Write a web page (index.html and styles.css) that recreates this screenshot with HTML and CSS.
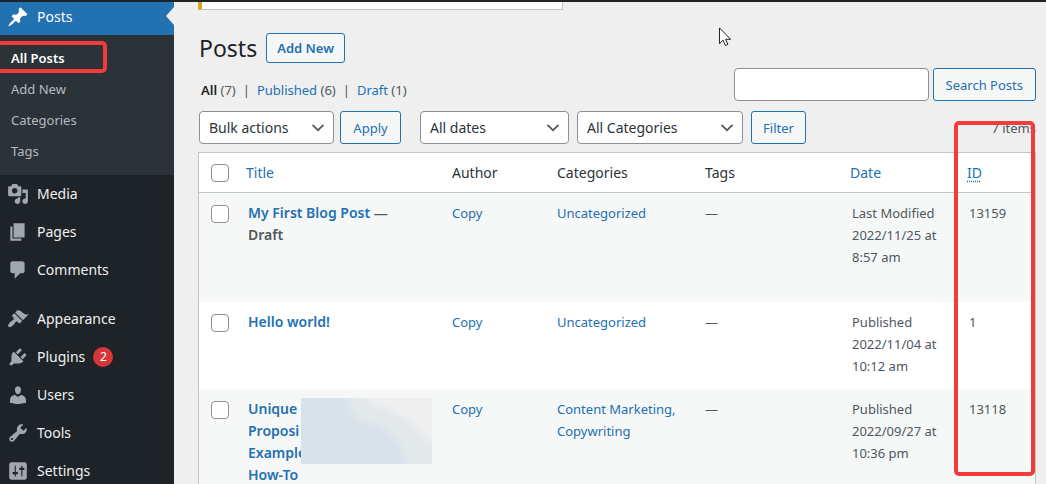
FILE: index.html
```html
<!DOCTYPE html>
<html lang="en">
<head>
<meta charset="utf-8">
<title>Posts</title>
<link rel="stylesheet" href="styles.css">
</head>
<body>
<div class="topbar"></div>
<div class="shell">
  <nav class="sidebar">
    <a class="item current" href="#"><svg class="icon" viewBox="0 0 20 20"><path d="M10.44 3.02l1.82-1.82 6.36 6.35-1.83 1.82c-1.05-.68-2.48-.57-3.41.36l-.75.75c-.92.93-1.04 2.35-.35 3.41l-1.83 1.82-2.41-2.41-2.8 2.79c-.42.42-3.38 2.71-3.8 2.29s1.86-3.39 2.28-3.81l2.79-2.79L4.1 9.36l1.83-1.82c1.05.69 2.48.57 3.4-.36l.75-.75c.93-.92 1.05-2.35.36-3.41z"/></svg>Posts</a>
    <ul class="submenu">
      <li class="active"><a href="#">All Posts</a></li>
      <li><a href="#">Add New</a></li>
      <li><a href="#">Categories</a></li>
      <li><a href="#">Tags</a></li>
    </ul>
    <div class="group">
      <a class="item" href="#"><svg class="icon" viewBox="0 0 20 20"><path d="M13 11V4c0-.55-.45-1-1-1h-1.67L9 1H5L3.67 3H2c-.55 0-1 .45-1 1v7c0 .55.45 1 1 1h10c.55 0 1-.45 1-1zM7 4.5c1.38 0 2.5 1.12 2.5 2.5S8.38 9.5 7 9.5 4.5 8.38 4.5 7 5.62 4.5 7 4.5zM14 6h5v10.5c0 1.38-1.12 2.5-2.5 2.5S14 17.88 14 16.5s1.12-2.5 2.5-2.5c.17 0 .34.02.5.05V9h-3V6zm-4 8.05V13h2v3.5c0 1.38-1.12 2.5-2.5 2.5S7 17.88 7 16.5 8.12 14 9.5 14c.17 0 .34.02.5.05z"/></svg>Media</a>
      <a class="item" href="#"><svg class="icon" viewBox="0 0 20 20"><path d="M6 15V2h10v13H6zm-1 1h8v2H3V5h2v11z"/></svg>Pages</a>
      <a class="item" href="#"><svg class="icon" viewBox="0 0 20 20"><path d="M5 2h9c1.1 0 2 .9 2 2v7c0 1.1-.9 2-2 2h-2l-5 5v-5H5c-1.1 0-2-.9-2-2V4c0-1.1.9-2 2-2z"/></svg>Comments</a>
    </div>
    <div class="group">
      <a class="item" href="#"><svg class="icon" viewBox="0 0 20 20"><path d="M14.48 11.06L7.41 3.99l1.5-1.5c.5-.56 2.3-.47 3.51.32 1.21.8 1.43 1.28 2.91 2.1 1.18.64 2.45 1.26 4.45.85zm-.71.71L6.7 4.7 4.93 6.47c-.39.39-.39 1.02 0 1.41l1.06 1.06c.39.39.39 1.03 0 1.42-.6.6-1.43 1.11-2.21 1.69-.35.26-.7.53-1.01.84C1.43 14.23.4 16.08 1.4 17.07c.99 1 2.84-.03 4.18-1.36.31-.31.58-.66.85-1.02.57-.78 1.08-1.61 1.69-2.21.39-.39 1.02-.39 1.41 0l1.06 1.06c.39.39 1.02.39 1.41 0z"/></svg>Appearance</a>
      <a class="item" href="#"><svg class="icon" viewBox="0 0 20 20"><path d="M13.11 4.36L9.87 7.6 8 5.73l3.24-3.24c.35-.34 1.05-.2 1.56.32.52.51.66 1.21.31 1.55zm-8 1.77l.91-1.12 9.01 9.01-1.19.84c-.71.71-2.63 1.16-3.82 1.16H6.14L4.9 17.26c-.59.59-1.54.59-2.12 0-.59-.58-.59-1.53 0-2.12l1.24-1.24v-3.88c0-1.13.4-3.19 1.09-3.89zm7.26 3.97l3.24-3.24c.34-.35 1.04-.21 1.55.31.52.51.66 1.21.31 1.55l-3.24 3.25z"/></svg>Plugins<span class="count">2</span></a>
      <a class="item" href="#"><svg class="icon" viewBox="0 0 20 20"><path d="M10 9.25c-2.27 0-2.73-3.44-2.73-3.44C7 4.02 7.82 2 9.97 2c2.16 0 2.98 2.02 2.71 3.81 0 0-.41 3.44-2.68 3.44zm0 2.57L12.72 10c2.39 0 4.52 2.33 4.52 4.53v2.49s-3.65 1.13-7.24 1.13c-3.65 0-7.24-1.13-7.24-1.13v-2.49c0-2.25 1.94-4.48 4.47-4.48z"/></svg>Users</a>
      <a class="item" href="#"><svg class="icon" viewBox="0 0 20 20"><path d="M16.68 9.77c-1.34 1.34-3.3 1.67-4.95.99l-5.41 6.52c-.99.99-2.59.99-3.58 0s-.99-2.59 0-3.57l6.52-5.42c-.68-1.65-.35-3.61.99-4.95 1.28-1.28 3.12-1.62 4.72-1.06l-2.89 2.89 2.82 2.82 2.86-2.87c.53 1.58.18 3.39-1.08 4.65zM3.81 16.21c.4.39 1.04.39 1.43 0 .4-.4.4-1.04 0-1.43-.39-.4-1.03-.4-1.43 0-.39.39-.39 1.03 0 1.43z"/></svg>Tools</a>
      <a class="item" href="#"><svg class="icon" viewBox="0 0 20 20"><path d="M18 16V4c0-1.1-.9-2-2-2H4c-1.1 0-2 .9-2 2v12c0 1.1.9 2 2 2h12c1.1 0 2-.9 2-2zM8 11h1c.55 0 1 .45 1 1s-.45 1-1 1H8v1.5c0 .28-.22.5-.5.5s-.5-.22-.5-.5V13H6c-.55 0-1-.45-1-1s.45-1 1-1h1V5.5c0-.28.22-.5.5-.5s.5.22.5.5V11zm5-2h-1c-.55 0-1-.45-1-1s.45-1 1-1h1V5.5c0-.28.22-.5.5-.5s.5.22.5.5V7h1c.55 0 1 .45 1 1s-.45 1-1 1h-1v5.5c0 .28-.22.5-.5.5s-.5-.22-.5-.5V9z"/></svg>Settings</a>
    </div>
  </nav>
  <main class="main">
    <div class="notice"></div>
    <header class="heading">
      <h1>Posts</h1>
      <a class="button add" href="#">Add New</a>
    </header>
    <div class="filters">
      <ul class="views">
        <li><a class="all" href="#">All</a> (7)</li>
        <li><a href="#">Published</a> (6)</li>
        <li><a href="#">Draft</a> (1)</li>
      </ul>
      <form class="search">
        <input type="search" aria-label="Search Posts">
        <button class="button" type="button">Search Posts</button>
      </form>
    </div>
    <div class="actions">
      <div class="bulk">
        <select class="bulk-select" aria-label="Bulk actions"><option>Bulk actions</option></select>
        <button class="button apply" type="button">Apply</button>
      </div>
      <div class="narrow">
        <select class="date-select" aria-label="Filter by date"><option>All dates</option></select>
        <select class="cat-select" aria-label="Filter by category"><option>All Categories</option></select>
        <button class="button filter" type="button">Filter</button>
      </div>
      <span class="total">7 items</span>
    </div>
    <table class="posts">
      <colgroup><col class="c-check"><col><col class="c-author"><col class="c-cats"><col class="c-tags"><col class="c-date"><col class="c-id"></colgroup>
      <thead>
        <tr>
          <th class="check"><input type="checkbox" aria-label="Select all"></th>
          <th class="inset"><a href="#">Title</a></th>
          <th>Author</th>
          <th>Categories</th>
          <th>Tags</th>
          <th class="inset"><a href="#">Date</a></th>
          <th class="inset"><a href="#"><abbr>ID</abbr></a></th>
        </tr>
      </thead>
      <tbody>
        <tr class="tall">
          <td class="check"><input type="checkbox" aria-label="Select My First Blog Post"></td>
          <td class="title"><a href="#">My First Blog Post</a> — <span>Draft</span></td>
          <td><a href="#">Copy</a></td>
          <td><a href="#">Uncategorized</a></td>
          <td>—</td>
          <td>Last Modified<br>2022/11/25 at 8:57 am</td>
          <td>13159</td>
        </tr>
        <tr>
          <td class="check"><input type="checkbox" aria-label="Select Hello world!"></td>
          <td class="title"><a href="#">Hello world!</a></td>
          <td><a href="#">Copy</a></td>
          <td><a href="#">Uncategorized</a></td>
          <td>—</td>
          <td>Published<br>2022/11/04 at 10:12 am</td>
          <td>1</td>
        </tr>
        <tr class="tall">
          <td class="check"><input type="checkbox" aria-label="Select Unique"></td>
          <td class="title"><div class="masked"><a href="#">Unique<br>Proposi<br>Example<br>How-To</a>
            <svg class="mask" viewBox="0 0 131 66" preserveAspectRatio="none">
              <defs><filter id="soft"><feGaussianBlur stdDeviation="3"/></filter></defs>
              <rect width="131" height="66" fill="#d8e2eb"/>
              <path filter="url(#soft)" d="M45-12Q44 22 68 26Q100 30 108 78H145V-12Z" fill="#e3e8eb"/>
              <path filter="url(#soft)" d="M54-12Q66 8 84 10Q108 20 119 34T140 46V-12Z" fill="#efefef"/>
            </svg></div></td>
          <td><a href="#">Copy</a></td>
          <td><a href="#">Content Marketing,<br>Copywriting</a></td>
          <td>—</td>
          <td>Published<br>2022/09/27 at 10:36 pm</td>
          <td>13118</td>
        </tr>
      </tbody>
    </table>
    <div class="id-outline"></div>
    <svg class="pointer" viewBox="0 0 13 20"><path d="M.5.9v15.7l3.6-3.4 2.4 5.3 2.4-1.1-2.3-5.1h5z" fill="#fff" stroke="#1d2327"/></svg>
  </main>
</div>
</body>
</html>
```

FILE: styles.css
```css
*, *::before, *::after { box-sizing: border-box; }
body {
  margin: 0;
  height: 100vh;
  overflow: hidden;
  background: #efefef;
  color: #50575e;
  font: 13px/22px "Noto Sans", "Open Sans", sans-serif;
}
a { color: #2271b1; text-decoration: none; }
ul { list-style: none; margin: 0; padding: 0; }

.topbar { height: 2px; background: #1d2327; }
.shell { display: flex; min-height: 100vh; }

.sidebar { flex: 0 0 174px; background: #1d2327; }
.item {
  display: flex;
  align-items: center;
  gap: 8px;
  height: 38px;
  padding-left: 7px;
  color: #f0f0f1;
  font-size: 14px;
}
.icon { width: 22px; height: 22px; fill: #a2a7ac; }
.current { position: relative; height: 33px; padding-bottom: 4px; background: #2271b1; color: #fff; }
.current .icon { fill: #fff; }
.current::after {
  content: "";
  position: absolute;
  right: 0;
  top: 5px;
  border: 9px solid transparent;
  border-left-width: 0;
  border-right: 8px solid #efefef;
}
.submenu { padding: 8px 0; background: #2c3338; }
.submenu li { position: relative; height: 31px; padding-left: 11px; line-height: 30px; }
.submenu a { color: #b5babf; }
.submenu .active a { color: #fff; font-weight: 600; }
.submenu .active::after {
  content: "";
  position: absolute;
  left: -4px;
  top: -2px;
  width: 111px;
  height: 32px;
  border: 4px solid #f23c3c;
  border-radius: 5px;
}
.group + .group { padding-top: 11px; }
.count {
  width: 20px;
  height: 20px;
  border-radius: 10px;
  background: #d63638;
  color: #fff;
  font-size: 12px;
  line-height: 20px;
  text-align: center;
}

.main { position: relative; flex: 1; min-width: 0; padding: 0 10px 0 24px; }
.notice {
  width: 365px;
  height: 8px;
  background: #fff;
  border: 1px solid #c3c4c7;
  border-top: 0;
  border-left: 4px solid #dba617;
}
.heading { display: flex; align-items: center; gap: 9px; padding: 23px 0 5px 1px; }
h1 { margin: 0; color: #1d2327; font-size: 23px; font-weight: 400; line-height: 30px; }
.button {
  height: 33px;
  padding: 0 12px;
  border: 1px solid #2271b1;
  border-radius: 3px;
  background: #f6f7f7;
  color: #2271b1;
  font: inherit;
  line-height: 30px;
  text-align: center;
}
.add { height: 30px; line-height: 28px; padding: 0 10px; font-weight: 600; }
.apply { width: 61px; }
.filter { width: 55px; padding: 0; }
.filters { display: flex; align-items: flex-end; justify-content: space-between; }
.views { display: flex; padding-left: 3px; }
.views li + li::before { content: "|"; padding: 0 7px; color: #50575e; }
.views .all { color: #1d2327; font-weight: 600; }
.search { display: flex; gap: 4px; }
input, select { border: 1px solid #8c8f94; border-radius: 4px; background: #fff; font: inherit; }
.search input { width: 195px; height: 33px; margin: 0; padding: 0 8px; }
.actions { display: flex; align-items: center; gap: 19px; padding: 10px 0 8px 1px; }
.bulk, .narrow { display: flex; gap: 6px; }
.narrow { gap: 8px; }
select {
  appearance: none;
  height: 33px;
  margin: 0;
  padding: 0 24px 0 9px;
  color: #2c3338;
  font-size: 14px;
  background: #fff url("data:image/svg+xml;utf8,<svg xmlns='http://www.w3.org/2000/svg' viewBox='0 0 20 20'><path d='M5 6l5 5 5-5 2 1-7 7-7-7z' fill='%2350575e'/></svg>") no-repeat right 6px center / 18px 18px;
}
.bulk-select { width: 135px; }
.date-select { width: 149px; }
.cat-select { width: 166px; }
.total { margin-left: auto; }

.posts {
  width: 100%;
  table-layout: fixed;
  border: 1px solid #c3c4c7;
  border-collapse: separate;
  border-spacing: 0;
  background: #fff;
}
.c-check { width: 39px; }
.c-author { width: 105px; }
.c-cats { width: 148px; }
.c-tags { width: 147px; }
.c-date { width: 117px; }
.c-id { width: 76px; }
th {
  height: 40px;
  padding: 0 10px;
  border-bottom: 1px solid #c3c4c7;
  color: #2c3338;
  font-size: 14px;
  font-weight: 400;
  text-align: left;
}
th.inset { padding-left: 8px; }
td { height: 87px; padding: 9px 10px; vertical-align: top; }
.tall td { height: 109px; }
tbody tr:nth-child(odd) { background: #f6f7f7; }
td.title { padding-right: 40px; font-size: 14px; font-weight: 600; }
th.check, td.check { padding-left: 12px; padding-right: 0; }
.check input { appearance: none; display: block; width: 18px; height: 18px; margin: 0; }
td.check input { margin-top: 3px; }
abbr { text-decoration: underline dotted; text-underline-offset: 3px; }
.masked { position: relative; }
.mask { position: absolute; left: 53px; top: 0; width: 131px; height: 66px; }

.id-outline {
  position: absolute;
  right: 11px;
  top: 119px;
  width: 81px;
  height: 355px;
  border: 4px solid #f23c3c;
  border-radius: 5px;
}
.pointer { position: absolute; left: 545px; top: 25px; width: 13px; height: 20px; }
```
